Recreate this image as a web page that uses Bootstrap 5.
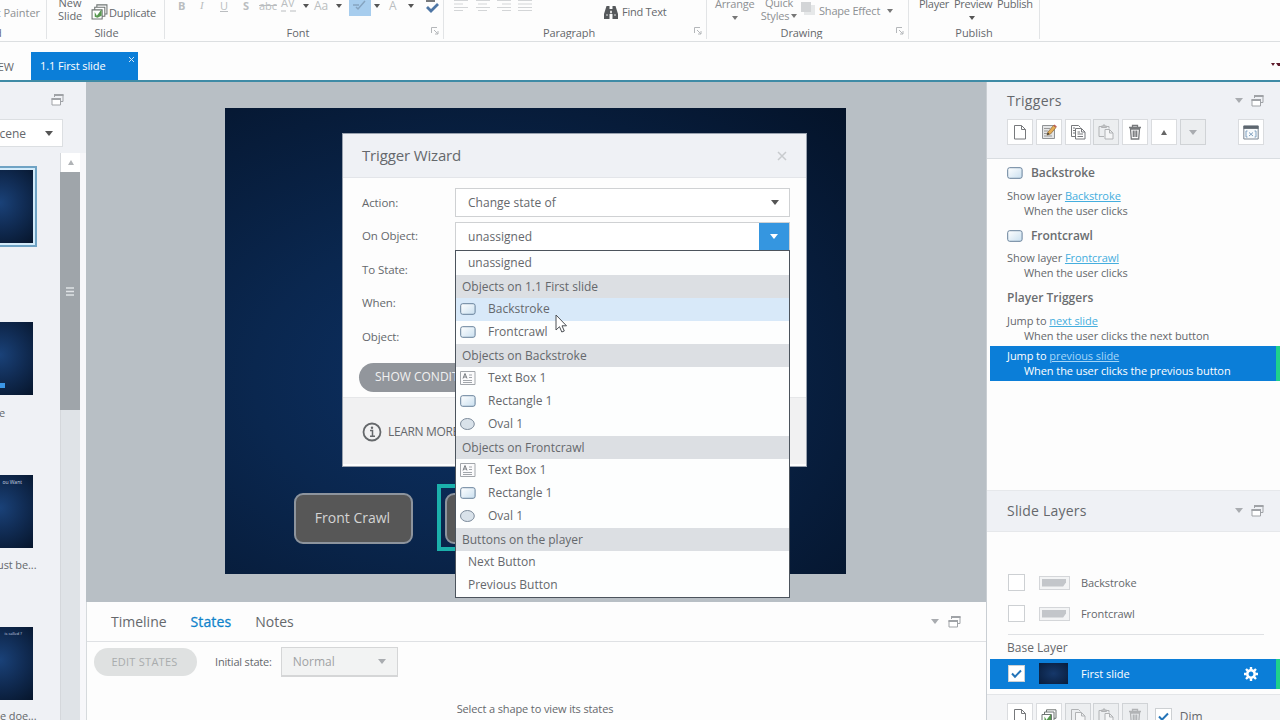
<!DOCTYPE html>
<html lang="en">
<head>
<meta charset="utf-8">
<meta name="viewport" content="width=device-width, initial-scale=1">
<title>Trigger Wizard</title>
<link href="https://cdn.jsdelivr.net/npm/bootstrap@5.3.0/dist/css/bootstrap.min.css" rel="stylesheet">
<style>
:root{--acc:#0b7ed8;--ink:#65686c;--panel:#eff1f5;--line:#d9dde1}
body{width:1280px;height:720px;overflow:hidden;font-family:"Open Sans","Noto Sans",sans-serif;font-size:11px;line-height:15px;color:var(--ink);background:#fdfdfd}
svg{display:block;flex:none}
svg.ico{fill:none;stroke:#77797c;stroke-width:1}
.caret{width:0;height:0;border:3px solid transparent;border-top:4px solid #555;border-bottom:0;flex:none}
.caret.big{border-width:5px 4.5px 0}
.caret.pale{border-top-color:#a9acb0}
.caret.up{border:3.5px solid transparent;border-bottom:5px solid #666;border-top:0}
/* ribbon */
.ribbon{height:42px;border-bottom:1px solid #dcdfe1;letter-spacing:-.05px}
.grp{height:39px;border-right:1px solid #e2e4e6;overflow:hidden;position:relative;flex:none}
.grp .tools{height:24px}
.grp .cap{height:17px;line-height:17px;text-align:center}
.two{line-height:12.5px;text-align:center}
.launch{position:absolute;right:4px;bottom:4px}
.dim{color:#8d9093}.faint{color:#babdc0}
.dim .caret{border-top-color:#777}
.tabs{height:40px;border-bottom:2px solid #3f8ba6}
.doc{width:107px;height:28px;background:var(--acc);color:#fff;margin-left:16px;padding-left:9px;line-height:28px;letter-spacing:-.1px}
.doc svg{margin:4px 3px 0 0}
/* slide list */
.side{width:86px;background:var(--panel);flex:none;overflow:hidden}
.scene{width:63px;height:28px;background:#fff;border:1px solid #dcdfe2;border-left:0;font-size:12px}
.th{width:33px;height:73px;background:radial-gradient(circle at 0 45%,#1a4279 0,#112d56 45%,#06152b 100%)}
.th.on{box-shadow:0 0 0 2px #d3ebfa,0 0 0 4px #6fa3c4}
.tcap{height:20px;line-height:20px;letter-spacing:-.1px}
.track{width:20px;background:#dfe3e7;border-left:1px solid #d4d7db}
.track .upb{height:19px;background:#fff}
.track .thumb{height:238px;background:#9fa5aa;margin-left:-1px}
/* stage */
.stage{height:520px;background:#b8bfc5;padding:26px 0 0 139px}
.slide{width:621px;height:466px;background:radial-gradient(ellipse at 38% 58%,#0c3063 0,#0a274f 38%,#071c3a 72%,#041329 100%);position:relative}
.shape{position:absolute;width:119px;height:51px;top:385px;background:#575757;border:2px solid #8d949d;border-radius:9px;color:#d4d4d4;font-size:14px;line-height:46px;padding-right:2px;text-align:center}
.selbox{position:absolute;left:212px;top:376px;width:145px;height:67px;border:4px solid #1bb0ab}
.dlg{position:absolute;left:117px;top:25px;width:465px;height:334px;border:1px solid #98a1ae;background:#fdfdfd;font-size:11.5px}
.dlg-h{height:44px;background:var(--panel);border-bottom:1px solid #e3e5e9;padding:0 19px;font-size:15px;letter-spacing:-.15px}
.frow{height:33.5px}
.frow label{width:93px;flex:none;padding-bottom:1px;letter-spacing:-.1px}
.fsel{width:335px;height:29px;border:1px solid #cfd1d3;background:#fff;font-size:12px;padding-left:12px;letter-spacing:.03px}
.open{width:30px;height:27px;background:#3596e0}
.cond{width:140px;height:29px;border-radius:15px;background:#92969c;color:#f1f1f1;padding-left:16px;line-height:28px;margin:9px 0 0 -3px;font-size:12px}
.dlg-f{height:67px;background:#f1f1f2;border-top:1px solid #e6e7e9;padding-left:19px;font-size:12px}
.menu{position:absolute;left:112px;top:116px;width:335px;height:348px;border:1px solid #4c545d;background:#fdfefe;font-size:12px}
.menu>div{height:23px;display:flex;align-items:center;padding:0 0 1px 12px}
.menu>div:first-child{height:23.5px;padding-bottom:0}
.menu .hd{background:#dcdfe3;padding:0 0 0 6px}
.menu .it{padding-left:4px;gap:12px}
.menu .hot{background:#d8e9f9}
.cursor{position:absolute;left:330px;top:206px}
/* states panel */
.lower{height:118px;background:#fdfdfd;border-left:1px solid #d6dadd}
.ltabs{height:40px;border-bottom:1px solid #dfe1e4;padding-left:24px;gap:24px;font-size:14px}
.pill{width:103px;height:28px;border-radius:14px;background:#dfe1e1;color:#a9acad;text-align:center;line-height:27px;padding-right:2px;letter-spacing:.25px}
.nsel{width:117px;height:30px;border:1px solid #d5d6d7;border-bottom-width:2px;background:#f2f3f3;color:#a0a2a4;padding:0 11px;font-size:12px}
/* right panel */
.right{width:294px;flex:none;border-left:1px solid #c9ced3;background:#fdfdfd}
.ph{font-size:14px;padding:0 16px 2px 20px;letter-spacing:.1px}
.tb{width:26px;height:26px;border:1px solid #dadcdf;background:#fff;flex:none}
.tb.off{background:#eceef0;border-color:#d0d3d6}
.tb.off svg{opacity:.5}
.trig{font-size:11px;letter-spacing:-.07px}
.trig .t{font-size:12px;font-weight:600;color:#6a6d70}
.ind{padding-left:37px}.l0{padding-left:20px}
.trig u{color:#45aede}
.selrow{background:var(--acc);color:#fff;border-right:4px solid #1fd08b;margin-left:3px}
.cb{width:17px;height:17px;border:1px solid #cdd0d3;background:#fff;flex:none}
.lay{height:31px;padding-left:21px;letter-spacing:-.1px}
.lt{width:31px;height:14px;border:1px solid #d4d6d9;background:#f3f4f5;padding:2px}
.lt i{display:block;width:24px;height:8px;background:#c3c6ca;clip-path:polygon(0 0,100% 0,100% 50%,88% 100%,0 100%)}
</style>
</head>
<body>
<svg width="0" height="0" class="position-absolute">
<defs>
<linearGradient id="g" x1="0" y1="0" x2="1" y2="1"><stop offset="0" stop-color="#fff"/><stop offset="1" stop-color="#c9dfef"/></linearGradient>
<symbol id="rect" viewBox="0 0 16 12"><rect x=".7" y=".7" width="14.4" height="10.6" rx="2" fill="url(#g)" stroke="#67809a"/></symbol>
<symbol id="oval" viewBox="0 0 16 12"><ellipse cx="7.4" cy="6" rx="6.900" ry="5.500" fill="#d9e2ea" stroke="#7d8b9b"/></symbol>
<symbol id="tbox" viewBox="0 0 16 14"><path d="M.5.5h14.500v13H.5zM9 4h3M9 6.500h3M3 9.500h9M3 11.500h9" stroke="#a2a6ab" fill="#fbfbfc"/><path d="M3 7.500l2-5 2 5M3.800 6h2.400" stroke="#777b80" fill="none"/></symbol>
<symbol id="float" viewBox="0 0 13 13"><path d="M3.500 4V1.500h8.500v7h-2" stroke="#a0a3a7" fill="none"/><path d="M3 2h9.500" stroke="#a0a3a7" stroke-width="2"/><path d="M1 5.500h8.500v6.500H1z" stroke="#a0a3a7" fill="#fff"/><path d="M.5 6h9.500" stroke="#a0a3a7" stroke-width="2"/></symbol>
<symbol id="page" viewBox="0 0 16 16"><path d="M2.500 1.500h7l4 4v9.500h-11zM9.500 1.500v4h4" fill="#fff"/></symbol>
<symbol id="copy" viewBox="0 0 16 16"><path d="M5 12.500H1.500v-11h7l2 2" fill="none"/><path d="M3 4h2M3 6.500h2M3 9h2"/><path d="M5.500 4.500h6l3.500 3.500v7H5.500zM11.500 4.500v3.500H15M7.500 8h2.500M7.500 10h5.500M7.500 12.500h5.500" fill="#fff"/></symbol>
<symbol id="copy2" viewBox="0 0 16 16"><path d="M5 12.500H1.500v-11h7l2 2" fill="none"/><path d="M5.500 4.500h6l3.500 3.500v7H5.500zM11.500 4.500v3.500H15" fill="#fff"/></symbol>
<symbol id="paste" viewBox="0 0 16 16"><path d="M6 12.500H1v-10h10v2" fill="none"/><path d="M3.500 3.500V2h1.500L6 .5 7 2h1.500v1.500z" fill="#999"/><path d="M7 5.500h4.500l3.500 3.500v6H7zM11.500 5.500V9H15" fill="#fff"/></symbol>
<symbol id="trash" viewBox="0 0 16 16"><path d="M2 3.500h12M5.500 3V1.500h5V3M3.500 5l.8 10h7.400l.8-10zM6.300 6.500v6.500M8 6.500v6.500M9.700 6.500v6.500" stroke-width="1.300" fill="none"/></symbol>
<symbol id="edit" viewBox="0 0 16 16"><path d="M1.500 1.500h12v13h-12z" fill="#e4e5e6" stroke="#909396"/><path d="M3 4.500h6M3 7h4M3 9.500h3M3 12h8" stroke="#999"/><path d="M6 11l1-3 5.500-6.500 2.500 2L9.500 10z" fill="#e5ad55" stroke="#94703c" stroke-width=".8"/><path d="M12.500 1.500l1-1 2.300 2-.8 1z" fill="#c05a57" stroke="none"/><path d="M6 11l.8-2.500 1.700 1.400z" fill="#333" stroke="none"/></symbol>
<symbol id="dup" viewBox="0 0 16 15"><path d="M5.500 3V.8H15v8.500h-2M3.500 5V3h9.500v8.500h-2M1 5.500h9.500v8.500H1z" stroke="#6f7573" fill="#fff"/><path d="M3.500 7.500l2 3.500 4.500-6v6l-4 2-2.500-1z" fill="#57984f"/></symbol>
<symbol id="vars" viewBox="0 0 16 15"><path d="M.8 1h14.400v13H.8z" fill="#f7fafc" stroke="#7c8793"/><path d="M.5 2.300h15" stroke="#5d666f" stroke-width="3.200"/><path d="M4.500 6H3v6h1.500M11.500 6H13v6h-1.500M6 7.500l4 3.500M10 7.500L6 11" stroke="#7fa0c0" fill="none"/></symbol>
<symbol id="launch" viewBox="0 0 8 8"><path d="M.5 6V.5H6M3 3l4 4M7 4v3H4" stroke="#b4b7ba" fill="none"/></symbol>
<symbol id="check" viewBox="0 0 15 15"><path d="M3 7.500l3 3.200 6-6.200" fill="none" stroke="#2474b8" stroke-width="2"/></symbol>
</defs>
</svg>

<div class="ribbon d-flex">
  <div class="grp" style="width:47px"><div class="tools d-flex justify-content-end dim" style="padding:5px 6px 0 0;width:46px"><span class="text-nowrap">t Painter</span></div><div class="cap text-start" style="margin-left:-5px">d</div></div>
  <div class="grp" style="width:118px"><div class="tools d-flex"><div class="two" style="width:24px;margin:-3px 9px 0 11px">New Slide</div><svg class="mt-1" width="17" height="16"><use href="#dup"/></svg><span style="margin:5px 0 0 1px;letter-spacing:-.15px">Duplicate</span></div><div class="cap" style="padding-left:2px">Slide</div></div>
  <div class="grp" style="width:279px"><div class="tools d-flex faint">
    <b style="margin:-2px 0 0 13px;width:22px">B</b><i style="margin-top:-2px;width:20px;font-family:'Liberation Serif'">I</i><u style="margin-top:-2px;width:23px;">U</u><b style="margin-top:-2px;width:16px;">S</b><s style="margin-top:-2px;width:22px;">abc</s>
    <div style="width:22px"><div style="margin-top:-4px;line-height:13px">AV</div><svg class="ico" width="15" height="4" style="stroke:#babdc0"><path d="M0 2h5M9 2h6"/></svg></div><div class="caret" style="margin-top:4px"></div>
    <span style="margin:-2px 0 0 5px;width:22px;font-size:12px">Aa</span><div class="caret" style="margin-top:4px"></div>
    <svg class="ico" width="22" height="16" style="margin-left:7px"><path d="M0 0h22v16H0z" fill="#a7cdee" stroke="none"/><path d="M4 5h6M7 7l2 2 7-8" stroke="#86a4c0" stroke-width="1.500"/></svg><div class="caret" style="margin:4px 0 0 3px"></div>
    <span style="margin:-2px 0 0 9px;width:19px;font-size:12px">A</span><div class="caret" style="margin-top:4px"></div>
    <svg class="ico" width="15" height="14" style="margin-left:11px"><path d="M1 1h9" stroke-width="2"/><path d="M2 7l4 4 7-7" stroke="#4e76a5" stroke-width="2.800"/></svg>
  </div><div class="cap" style="padding-right:12px">Font</div><svg class="launch" width="8" height="8"><use href="#launch"/></svg></div>
  <div class="grp" style="width:263px"><div class="tools d-flex">
    <svg class="ico" width="84" height="14" style="margin-left:10px;stroke:#d3d5d7"><path d="M0 .5h14M0 4h9M0 7.500h14M0 10.500h9M22 .5h14M24 4h9M22 7.500h14M24 10.500h9M43 .5h14M48 4h9M43 7.500h14M48 10.500h9M64 .5h14M64 4h14M64 7.500h14M64 10.500h14"/></svg>
    <svg width="14" height="13" style="margin:6px 4px 0 66px" fill="#55585b"><path d="M2.500 0h3v3h3V0h3l2.500 8v5H8.500V8h-3v5H0V8z"/><path d="M6.500 5h1v2h-1zM2 9h2M10 9h2" fill="#fff" stroke="#ddd"/></svg><span style="margin-top:4px;letter-spacing:-.25px">Find Text</span>
  </div><div class="cap" style="padding-right:12px;letter-spacing:-.15px">Paragraph</div><svg class="launch" width="8" height="8"><use href="#launch"/></svg></div>
  <div class="grp" style="width:202px"><div class="tools d-flex dim">
    <div style="width:40px;margin:-4px 0 0 8px;letter-spacing:-.2px">Arrange<div class="caret mx-auto" style="margin-top:5px"></div></div>
    <div class="two" style="width:40px;margin:-3px 0 0 4px;letter-spacing:-.2px">Quick<div class="d-flex align-items-center justify-content-center">Styles<div class="caret" style="margin-left:2px"></div></div></div>
    <svg width="14" height="13" style="margin:2px 4px 0 2px"><path d="M3 3h11v10H3z" fill="#e6e8e9"/><path d="M0 0h10v10H0z" fill="#d3d5d7"/></svg><span style="margin-top:3px;letter-spacing:-.2px">Shape Effect</span><div class="caret" style="margin:9px 0 0 7px"></div>
  </div><div class="cap" style="padding-right:12px;letter-spacing:-.1px">Drawing</div><svg class="launch" width="8" height="8"><use href="#launch"/></svg></div>
  <div class="grp" style="width:131px"><div class="tools d-flex" style="padding-left:10px;letter-spacing:-.28px"><span style="margin-top:-4px;width:35px">Player</span><div style="margin-top:-4px;width:43px">Preview<div class="caret" style="margin:5px 0 0 15px"></div></div><span style="margin-top:-4px">Publish</span></div><div class="cap">Publish</div></div>
</div>

<div class="tabs d-flex align-items-end">
  <div class="text-nowrap d-flex justify-content-end" style="width:14px;height:21px"><span>EW</span></div>
  <div class="doc d-flex justify-content-between" style="margin-left:17px">1.1 First slide<svg class="ico" width="7" height="7" style="stroke:#cfe5f7"><path d="M1 1l5 5M6 1L1 6"/></svg></div>
  <svg class="ms-auto" width="9" height="5" fill="#5d1a2a" style="margin-bottom:13px"><path d="M0 1h4L2 4zM5 1h4v3H7z"/></svg>
</div>

<div class="d-flex" style="height:638px">
  <aside class="side">
    <div class="d-flex justify-content-end" style="height:37px;padding:11px 22px 0 0"><svg width="13" height="13"><use href="#float"/></svg></div>
    <div class="scene d-flex align-items-center"><div class="d-flex justify-content-end" style="width:26px"><span>cene</span></div><div class="caret big ms-auto" style="margin-right:9px"></div></div>
    <div class="d-flex" style="height:568px;margin-top:6px">
      <div style="width:60px;padding-top:17px">
        <div class="th on"></div>
        <div style="height:79px"></div>
        <div class="th d-flex align-items-end"><div style="width:5px;height:5px;background:#3b97e8;margin-bottom:7px"></div></div>
        <div class="tcap" style="margin-top:8px;margin-left:-1px">e</div><div style="height:52px"></div>
        <div class="th text-end text-nowrap" style="font-size:5px;line-height:14px;padding-right:11px;color:#cbd5e2">ou Want</div>
        <div class="tcap text-nowrap" style="margin-top:7px;margin-left:-3px;width:38px">ust be...</div><div style="height:52px"></div>
        <div class="th text-end text-nowrap" style="font-size:4px;line-height:13px;padding-right:11px;color:#cbd5e2">is called ?</div>
        <div class="tcap text-nowrap" style="margin-top:6px;width:38px">e doe...</div>
      </div>
      <div class="track"><div class="upb d-flex align-items-center justify-content-center"><div class="caret up" style="border-bottom-color:#b0b3b6"></div></div><div class="thumb d-flex align-items-center justify-content-center"><svg width="8" height="9"><path d="M0 1h8M0 4.500h8M0 8h8" stroke="#e0e3e6" stroke-width="1.500"/></svg></div></div>
      <div style="width:6px;background:#f7f7fa"></div>
    </div>
  </aside>

  <main style="width:900px;flex:none">
    <div class="stage">
      <div class="slide">
        <div class="shape" style="left:69px">Front Crawl</div>
        <div class="selbox"></div><div class="shape" style="left:220px"></div>
        <div class="dlg">
          <div class="dlg-h d-flex align-items-center justify-content-between"><span>Trigger Wizard</span><svg class="ico" width="10" height="10" style="stroke:#c8cbce;stroke-width:1.500"><path d="M1 1l8 8M9 1L1 9"/></svg></div>
          <div style="height:219px;padding:8px 16px 0 19px">
            <div class="frow d-flex align-items-center"><label>Action:</label><div class="fsel d-flex align-items-center">Change state of<div class="caret big ms-auto" style="margin-right:10px"></div></div></div>
            <div class="frow d-flex align-items-center"><label>On Object:</label><div class="fsel d-flex align-items-center">unassigned<div class="open ms-auto d-flex align-items-center justify-content-center"><div class="caret big" style="border-top-color:#fff"></div></div></div></div>
            <div class="frow d-flex align-items-center"><label>To State:</label></div>
            <div class="frow d-flex align-items-center"><label>When:</label></div>
            <div class="frow d-flex align-items-center"><label>Object:</label></div>
            <div class="cond text-nowrap">SHOW CONDIT</div>
          </div>
          <div class="dlg-f d-flex align-items-center"><svg width="20" height="20" style="margin-top:2px"><circle cx="10" cy="10" r="8.500" fill="none" stroke="#65686b" stroke-width="1.800"/><path d="M8 8.500h2.500V14M8 14.300h5" fill="none" stroke="#65686b" stroke-width="1.500"/><circle cx="10" cy="5.800" r="1.200" fill="#65686b"/></svg><span style="margin:1px 0 0 6px;letter-spacing:-.35px">LEARN MORE</span></div>
          <div class="menu">
            <div>unassigned</div>
            <div class="hd">Objects on 1.1 First slide</div>
            <div class="it hot"><svg width="16" height="12"><use href="#rect"/></svg>Backstroke</div>
            <div class="it"><svg width="16" height="12"><use href="#rect"/></svg>Frontcrawl</div>
            <div class="hd">Objects on Backstroke</div>
            <div class="it"><svg width="16" height="14"><use href="#tbox"/></svg>Text Box 1</div>
            <div class="it"><svg width="16" height="12"><use href="#rect"/></svg>Rectangle 1</div>
            <div class="it"><svg width="16" height="12"><use href="#oval"/></svg>Oval 1</div>
            <div class="hd">Objects on Frontcrawl</div>
            <div class="it"><svg width="16" height="14"><use href="#tbox"/></svg>Text Box 1</div>
            <div class="it"><svg width="16" height="12"><use href="#rect"/></svg>Rectangle 1</div>
            <div class="it"><svg width="16" height="12"><use href="#oval"/></svg>Oval 1</div>
            <div class="hd">Buttons on the player</div>
            <div>Next Button</div>
            <div>Previous Button</div>
          </div>
        </div>
        <svg class="cursor" width="13" height="20"><path d="M1 1v15l3.500-3.300 2.300 5.300 2.500-1-2.300-5.200H11.500z" fill="#fff" stroke="#4c5055"/></svg>
      </div>
    </div>
    <div class="lower">
      <div class="ltabs d-flex align-items-center"><span>Timeline</span><span style="color:#0f83cb;-webkit-text-stroke:.3px #0f83cb;letter-spacing:.1px">States</span><span>Notes</span><div class="caret big pale ms-auto" style="margin-right:-15px"></div><svg width="13" height="13" style="margin-right:25px"><use href="#float"/></svg></div>
      <div class="d-flex align-items-center" style="padding:5px 0 0 7px"><div class="pill">EDIT STATES</div><span style="margin:-1px 9px 0 18px;letter-spacing:-.18px">Initial state:</span><div class="nsel d-flex align-items-center justify-content-between">Normal<div class="caret big pale"></div></div></div>
      <div class="text-center" style="margin:24px 3px 0 0"><span style="letter-spacing:-.12px">Select a shape to view its states</span></div>
    </div>
  </main>

  <aside class="right">
    <div style="height:77px;background:var(--panel);border-bottom:1px solid var(--line)">
      <div class="ph d-flex align-items-center gap-2" style="height:38px"><span class="me-auto" style="letter-spacing:.3px">Triggers</span><div class="caret big pale"></div><svg width="13" height="13"><use href="#float"/></svg></div>
      <div class="d-flex" style="gap:2.800px;padding:0 16px 0 20px;margin-top:-1px">
        <div class="tb d-flex align-items-center justify-content-center"><svg class="ico" width="16" height="16"><use href="#page"/></svg></div>
        <div class="tb d-flex align-items-center justify-content-center"><svg class="ico" width="16" height="16"><use href="#edit"/></svg></div>
        <div class="tb d-flex align-items-center justify-content-center"><svg class="ico" width="16" height="16"><use href="#copy"/></svg></div>
        <div class="tb off d-flex align-items-center justify-content-center"><svg class="ico" width="16" height="16"><use href="#paste"/></svg></div>
        <div class="tb d-flex align-items-center justify-content-center"><svg class="ico" width="16" height="16"><use href="#trash"/></svg></div>
        <div class="tb d-flex align-items-center justify-content-center"><div class="caret up"></div></div>
        <div class="tb off d-flex align-items-center justify-content-center"><div class="caret big pale"></div></div>
        <div class="tb d-flex align-items-center justify-content-center ms-auto"><svg class="ico" width="16" height="15"><use href="#vars"/></svg></div>
      </div>
    </div>
    <div class="trig" style="height:331px;padding-top:6px">
      <div class="t l0 d-flex align-items-center"><svg width="16" height="12" style="margin-right:8px"><use href="#rect"/></svg><span>Backstroke</span></div>
      <div class="l0" style="margin-top:8px">Show layer <u>Backstroke</u></div><div class="ind">When the user clicks</div>
      <div class="t l0 d-flex align-items-center" style="margin-top:10px"><svg width="16" height="12" style="margin-right:8px"><use href="#rect"/></svg><span>Frontcrawl</span></div>
      <div class="l0" style="margin-top:7px">Show layer <u>Frontcrawl</u></div><div class="ind">When the user clicks</div>
      <div class="t l0" style="margin-top:10px;letter-spacing:.03px">Player Triggers</div>
      <div class="l0" style="margin-top:8px">Jump to <u>next slide</u></div><div class="ind">When the user clicks the next button</div>
      <div class="selrow" style="height:35px;margin-top:3px;padding-top:2px"><div style="padding-left:17px">Jump to <u style="color:#a5d6f8">previous slide</u></div><div style="padding-left:34px">When the user clicks the previous button</div></div>
    </div>
    <div class="ph d-flex align-items-center gap-2" style="height:42px;background:var(--panel);border-top:1px solid #e6e8eb;border-bottom:1px solid #e6e8eb"><span class="me-auto" style="letter-spacing:.2px">Slide Layers</span><div class="caret big pale"></div><svg width="13" height="13"><use href="#float"/></svg></div>
    <div style="height:162px;padding-top:35px">
      <div class="lay d-flex align-items-center"><div class="cb"></div><div class="lt" style="margin:0 11px 0 14px"><i></i></div>Backstroke</div>
      <div class="lay d-flex align-items-center"><div class="cb"></div><div class="lt" style="margin:0 11px 0 14px"><i></i></div>Frontcrawl</div>
      <div style="height:6px;border-bottom:1px solid #dfe1e4;margin:0 16px 0 21px"></div>
      <div class="l0" style="margin-top:5px;font-size:12px;line-height:16px">Base Layer</div>
      <div class="selrow d-flex align-items-center" style="height:30px;padding:0 0 1px 18px;margin-top:3px"><div class="cb"><svg width="15" height="15"><use href="#check"/></svg></div><div style="width:29px;height:21px;margin:0 13px 0 14px;background:radial-gradient(#16386a,#081c3b)"></div><span>First slide</span>
      <svg class="ms-auto" width="14" height="14" viewBox="-7 -7 14 14" style="margin-right:18px"><circle r="3.700" fill="none" stroke="#fff" stroke-width="2.600"/><path d="M0-7v2.500M0 7V4.500M-7 0h2.500M7 0H4.500M-5-5l1.800 1.800M5 5L3.200 3.200M-5 5l1.800-1.800M5-5L3.200-3.200" stroke="#fff" stroke-width="2.400"/></svg></div>
    </div>
    <div class="d-flex" style="height:27px;background:#f3f4f6;border-top:1px solid #e3e5e8;gap:2.800px;padding:8px 0 0 20px">
      <div class="tb d-flex align-items-center justify-content-center"><svg class="ico" width="16" height="16"><use href="#page"/></svg></div>
      <div class="tb d-flex align-items-center justify-content-center"><svg width="16" height="15"><use href="#dup"/></svg></div>
      <div class="tb off d-flex align-items-center justify-content-center"><svg class="ico" width="16" height="16"><use href="#copy2"/></svg></div>
      <div class="tb off d-flex align-items-center justify-content-center"><svg class="ico" width="16" height="16"><use href="#paste"/></svg></div>
      <div class="tb off d-flex align-items-center justify-content-center"><svg class="ico" width="16" height="16"><use href="#trash"/></svg></div>
      <div class="cb" style="margin:5px 5px 0 4px"><svg width="15" height="15"><use href="#check"/></svg></div><span style="margin-top:6px;font-size:12px">Dim</span>
    </div>
  </aside>
</div>
<script src="https://cdn.jsdelivr.net/npm/bootstrap@5.3.0/dist/js/bootstrap.bundle.min.js"></script>
</body>
</html>
